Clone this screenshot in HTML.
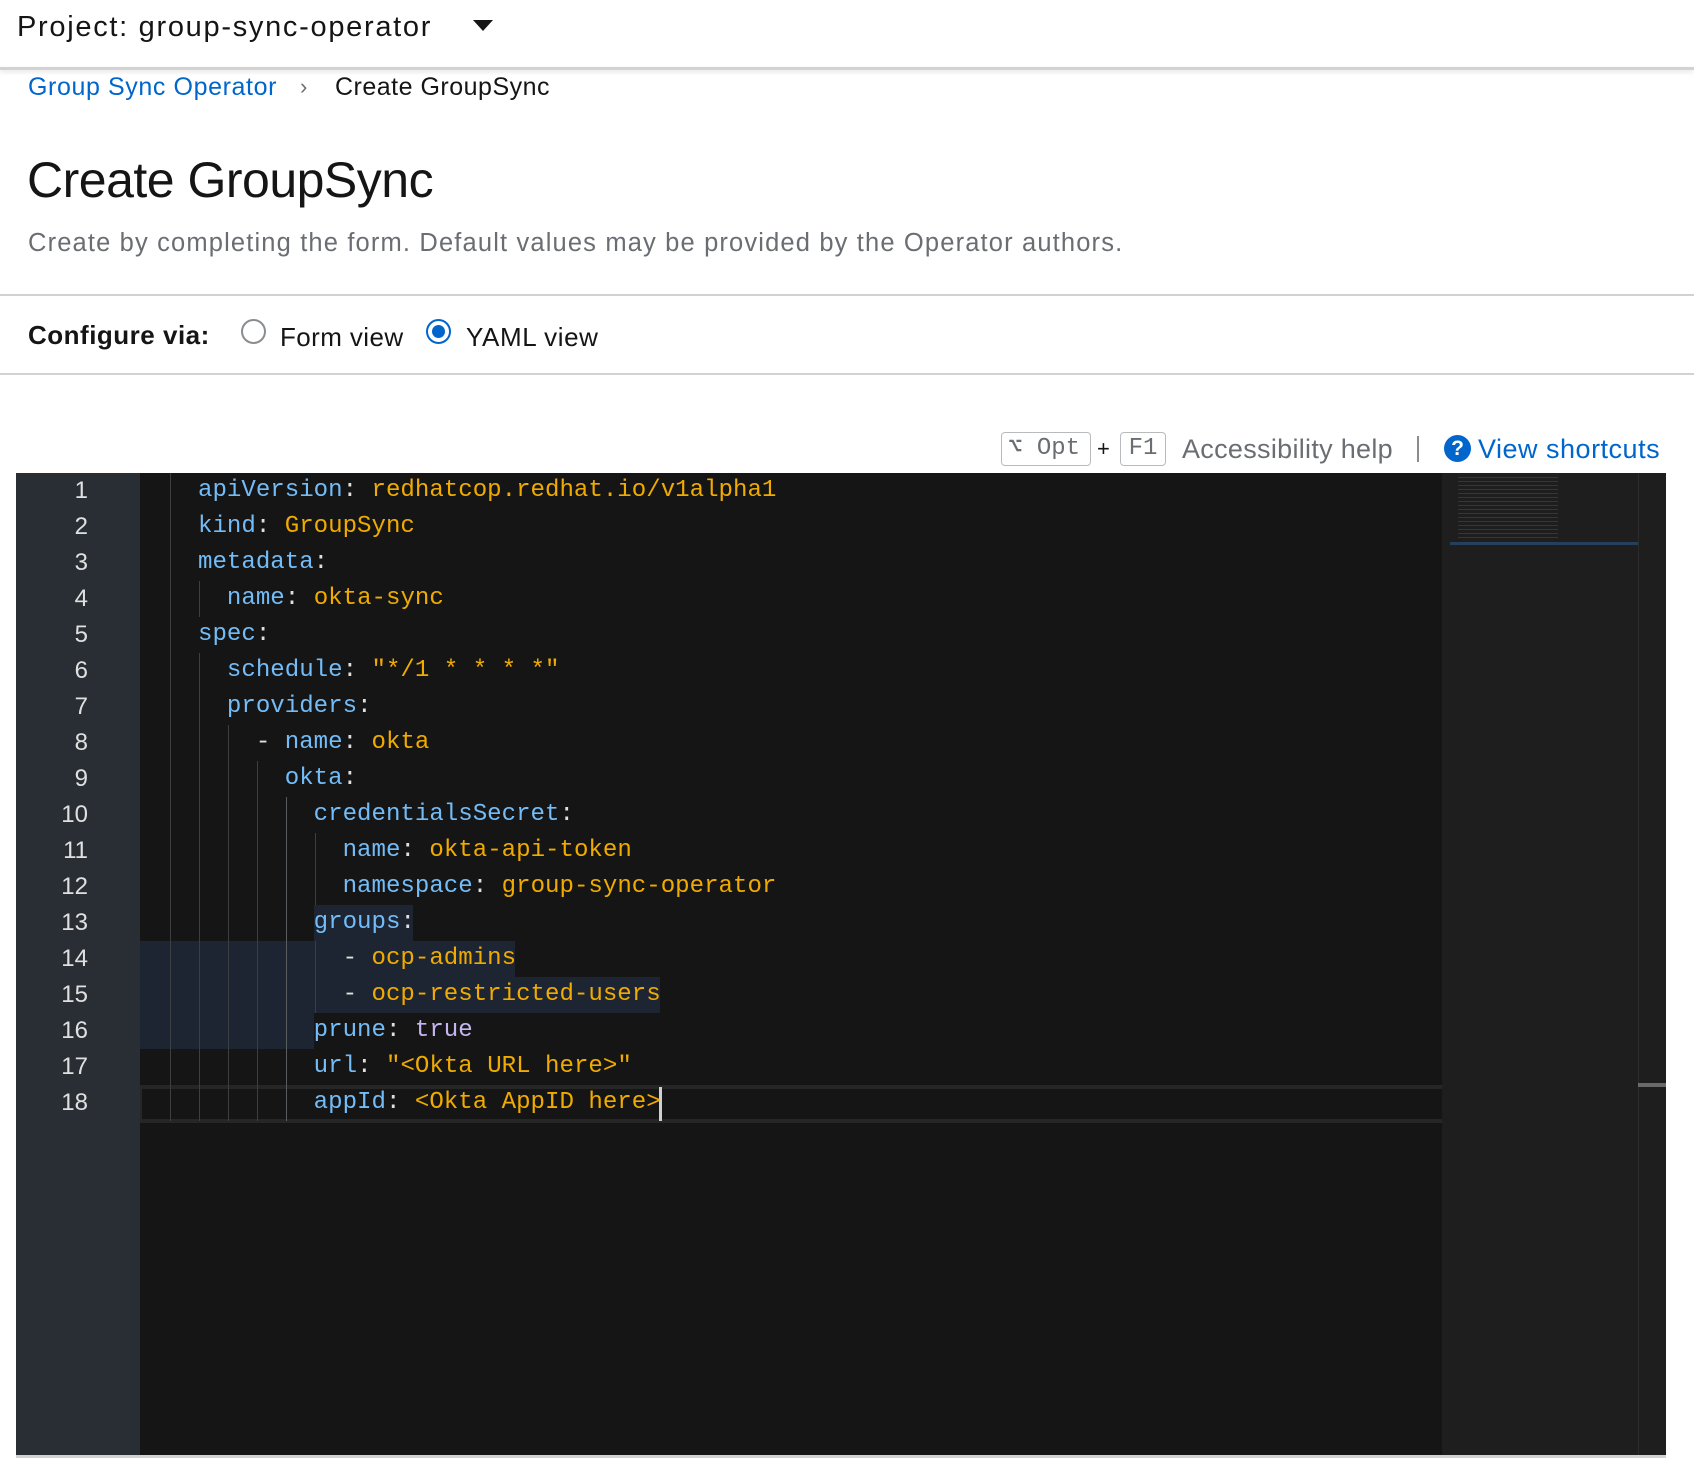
<!DOCTYPE html>
<html><head><meta charset="utf-8"><style>
*{margin:0;padding:0;box-sizing:border-box}
body{width:1694px;height:1480px;background:#fff;position:relative;overflow:hidden;font-family:"Liberation Sans",sans-serif;color:#151515}
.a{position:absolute;white-space:nowrap}
.code{font-family:"Liberation Mono",monospace;font-size:24.1px;line-height:36px}
.k{color:#73bcf7}.v{color:#f0ab00}.p{color:#e0e0e0}.t{color:#c5b5f0}
.g{position:absolute;width:1px;background:#3c3f42}
.ln{position:absolute;left:16px;width:72px;text-align:right;color:#e0e0e0;font-family:"Liberation Sans",sans-serif;font-size:24px;line-height:36px}
.sel{position:absolute;background:#1c2531}
</style></head><body>
<div class="a" style="left:17px;top:8px;font-size:29px;line-height:38px;letter-spacing:1.7px">Project: group-sync-operator</div>
<div class="a" style="left:473px;top:20px;width:0;height:0;border-left:10px solid transparent;border-right:10px solid transparent;border-top:11px solid #151515"></div>
<div class="a" style="left:0;top:67px;width:1694px;height:3px;background:#d2d2d2;box-shadow:0 2px 4px rgba(0,0,0,.12)"></div>
<div class="a" style="left:28px;top:71px;font-size:25px;line-height:32px;color:#0066cc;letter-spacing:0.6px">Group Sync Operator</div>
<div class="a" style="left:300px;top:71px;font-size:22px;line-height:32px;color:#6a6e73">›</div>
<div class="a" style="left:335px;top:71px;font-size:25px;line-height:32px;letter-spacing:0.5px">Create GroupSync</div>
<div class="a" style="left:27px;top:150px;font-size:50px;line-height:60px;font-weight:500;letter-spacing:-0.5px">Create GroupSync</div>
<div class="a" style="left:28px;top:227px;font-size:25.5px;line-height:32px;color:#6a6e73;letter-spacing:1.15px">Create by completing the form. Default values may be provided by the Operator authors.</div>
<div class="a" style="left:0;top:294px;width:1694px;height:2px;background:#d2d2d2"></div>
<div class="a" style="left:28px;top:318px;font-size:26px;line-height:34px;font-weight:bold;letter-spacing:0.5px">Configure via:</div>
<div class="a" style="left:241px;top:319px;width:25px;height:25px;border:2px solid #8a8d90;border-radius:50%"></div>
<div class="a" style="left:280px;top:320px;font-size:26px;line-height:34px;letter-spacing:0.4px">Form view</div>
<div class="a" style="left:426px;top:319px;width:25px;height:25px;border:2px solid #0066cc;border-radius:50%"><div style="position:absolute;left:4px;top:4px;width:13px;height:13px;border-radius:50%;background:#0066cc"></div></div>
<div class="a" style="left:466px;top:320px;font-size:26px;line-height:34px;letter-spacing:0.6px">YAML view</div>
<div class="a" style="left:0;top:373px;width:1694px;height:2px;background:#d2d2d2"></div>
<div class="a" style="left:1001px;top:432px;width:90px;height:34px;border:1.5px solid #b8bbbe;border-radius:4px;font-family:'Liberation Mono',monospace;font-size:24px;line-height:31px;color:#6a6e73;padding-left:6px">⌥ Opt</div>
<div class="a" style="left:1097px;top:434px;font-size:22px;line-height:30px">+</div>
<div class="a" style="left:1120px;top:432px;width:46px;height:34px;border:1.5px solid #b8bbbe;border-radius:4px;font-family:'Liberation Mono',monospace;font-size:24px;line-height:31px;color:#6a6e73;text-align:center">F1</div>
<div class="a" style="left:1182px;top:431px;font-size:27px;line-height:36px;color:#6a6e73;letter-spacing:0.3px">Accessibility help</div>
<div class="a" style="left:1417px;top:436px;width:2px;height:26px;background:#8a8d90"></div>
<div class="a" style="left:1444px;top:435px;width:27px;height:27px;border-radius:50%;background:#0066cc;color:#fff;font-weight:bold;font-size:21px;line-height:27px;text-align:center">?</div>
<div class="a" style="left:1478px;top:431px;font-size:27px;line-height:36px;color:#0066cc;letter-spacing:0.5px">View shortcuts</div>

<div class="a" style="left:16px;top:473px;width:1650px;height:982px;background:#151515"></div>
<div class="a" style="left:16px;top:473px;width:124px;height:982px;background:#292e34"></div>
<div class="a" style="left:1442px;top:473px;width:196px;height:982px;background:#1e1e1e"></div>
<div class="a" style="left:1638px;top:473px;width:28px;height:982px;background:#1e1e1e;border-left:1px solid #2c2c2c"></div>
<div class="a" style="left:1638px;top:1083px;width:28px;height:4px;background:#6a6a6a"></div>
<div class="a" style="left:1450px;top:542px;width:188px;height:3px;background:#264f78;opacity:.7"></div>
<div class="a" style="left:1458px;top:475px;width:100px;height:66px;background:repeating-linear-gradient(#1e1e1e 0 2px,rgba(200,160,60,.18) 2px 3px,#1e1e1e 3px 4px)"></div>

<div class="sel" style="left:314px;top:905px;width:99px;height:36px"></div>
<div class="sel" style="left:140px;top:941px;width:375px;height:36px"></div>
<div class="sel" style="left:140px;top:977px;width:520px;height:36px"></div>
<div class="sel" style="left:140px;top:1013px;width:174px;height:36px"></div>
<div class="a" style="left:140px;top:1085px;width:1302px;height:4px;background:#262626"></div>
<div class="a" style="left:140px;top:1119px;width:1302px;height:4px;background:#262626"></div>
<div class="a" style="left:140px;top:1089px;width:2px;height:30px;background:#262626"></div>

<div class="g" style="left:170px;top:473px;height:648px"></div>
<div class="g" style="left:199px;top:581px;height:36px"></div>
<div class="g" style="left:199px;top:653px;height:468px"></div>
<div class="g" style="left:228px;top:725px;height:396px"></div>
<div class="g" style="left:257px;top:761px;height:360px"></div>
<div class="g" style="left:286px;top:797px;height:324px;background:#5a5d60"></div>
<div class="g" style="left:315px;top:833px;height:72px"></div>
<div class="g" style="left:315px;top:941px;height:72px"></div>
<div class="a" style="left:659px;top:1087px;width:3px;height:34px;background:#d0d0d0"></div>

<div class="ln" style="top:473px">1<br>2<br>3<br>4<br>5<br>6<br>7<br>8<br>9<br>10<br>11<br>12<br>13<br>14<br>15<br>16<br>17<br>18</div>
<div class="a code" style="left:198px;top:473px;white-space:pre"><span class="k">apiVersion</span><span class="p">: </span><span class="v">redhatcop.redhat.io/v1alpha1</span>
<span class="k">kind</span><span class="p">: </span><span class="v">GroupSync</span>
<span class="k">metadata</span><span class="p">:</span>
  <span class="k">name</span><span class="p">: </span><span class="v">okta-sync</span>
<span class="k">spec</span><span class="p">:</span>
  <span class="k">schedule</span><span class="p">: </span><span class="v">"*/1 * * * *"</span>
  <span class="k">providers</span><span class="p">:</span>
    <span class="p">- </span><span class="k">name</span><span class="p">: </span><span class="v">okta</span>
      <span class="k">okta</span><span class="p">:</span>
        <span class="k">credentialsSecret</span><span class="p">:</span>
          <span class="k">name</span><span class="p">: </span><span class="v">okta-api-token</span>
          <span class="k">namespace</span><span class="p">: </span><span class="v">group-sync-operator</span>
        <span class="k">groups</span><span class="p">:</span>
          <span class="p">- </span><span class="v">ocp-admins</span>
          <span class="p">- </span><span class="v">ocp-restricted-users</span>
        <span class="k">prune</span><span class="p">: </span><span class="t">true</span>
        <span class="k">url</span><span class="p">: </span><span class="v">"&lt;Okta URL here&gt;"</span>
        <span class="k">appId</span><span class="p">: </span><span class="v">&lt;Okta AppID here&gt;</span></div>
<div class="a" style="left:16px;top:1455px;width:1650px;height:3px;background:#d2d2d2"></div>
</body></html>
